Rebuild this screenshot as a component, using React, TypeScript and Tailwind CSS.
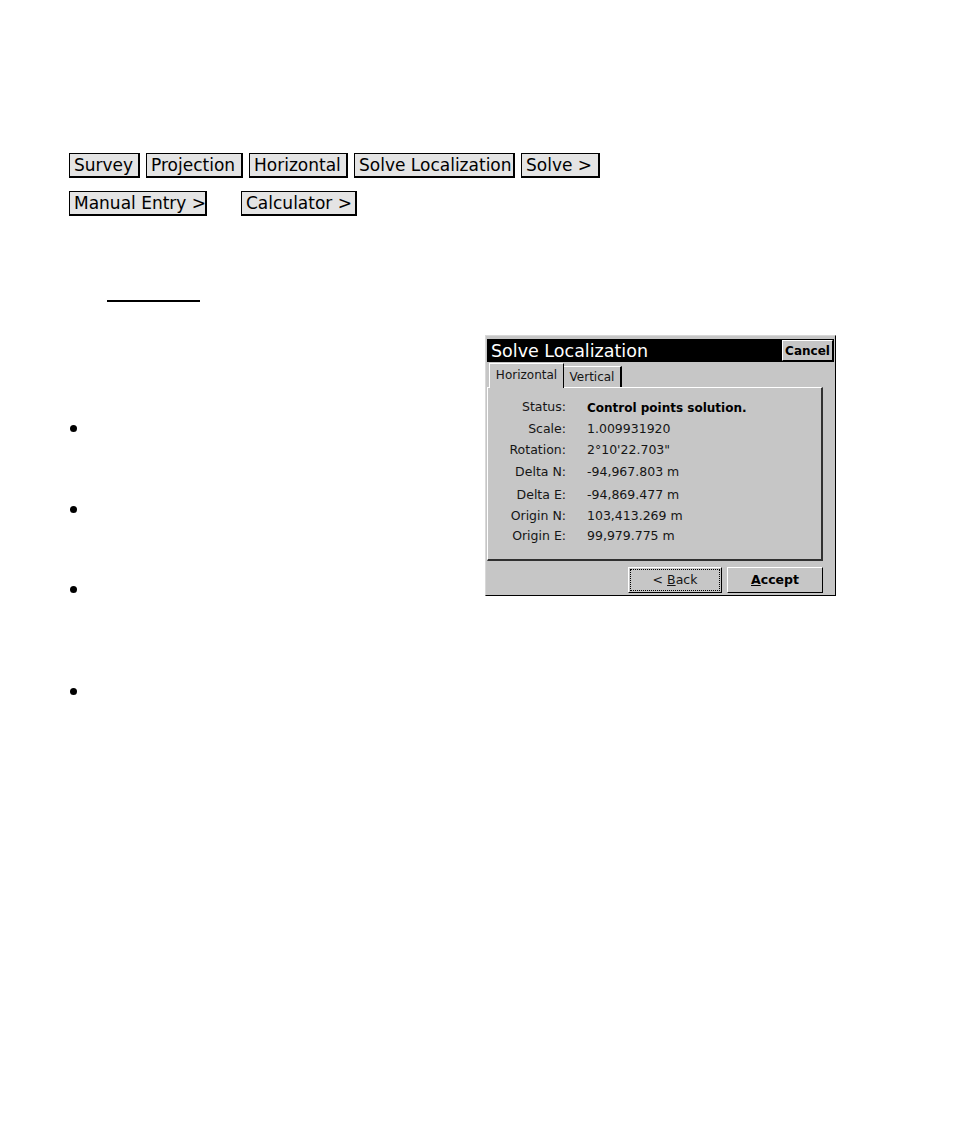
import React from "react";

const dv = { fontFamily: '"DejaVu Sans", Verdana, sans-serif' };

function NavBtn({ label, w }: { label: string; w: string }) {
  return (
    <div
      className={`${w} h-[25px] bg-[#e4e4e4] border border-black border-r-2 border-b-2 flex items-center pl-[4px] text-[17px] leading-none text-black whitespace-nowrap`}
    >
      {label}
    </div>
  );
}

const rows: { label: string; value: string; bold?: boolean; h: string }[] = [
  { label: "Status:", value: "Control points solution.", bold: true, h: "h-[21px]" },
  { label: "Scale:", value: "1.009931920", h: "h-[22px]" },
  { label: "Rotation:", value: "2°10'22.703\"", h: "h-[21px]" },
  { label: "Delta N:", value: "-94,967.803 m", h: "h-[23px]" },
  { label: "Delta E:", value: "-94,869.477 m", h: "h-[22px]" },
  { label: "Origin N:", value: "103,413.269 m", h: "h-[20px]" },
  { label: "Origin E:", value: "99,979.775 m", h: "h-[20px]" },
];

function Dialog() {
  return (
    <div
      className="w-[351px] h-[261px] bg-[#c6c6c6] border border-t-[#d8d8d8] border-l-[#d8d8d8] border-r-black border-b-black flex flex-col text-[12.5px] text-[#151515]"
      style={dv}
    >
      {/* title bar */}
      <div className="mt-[3px] mx-[1px] h-[23px] bg-black flex items-center justify-between pl-[4px] pr-[1px]">
        <span className="text-white text-[17.5px] leading-none pt-[2px]">Solve Localization</span>
        <div className="w-[51px] h-[21px] bg-[#c6c6c6] border border-t-white border-l-white border-r-black border-b-black flex items-center justify-center font-bold text-[12px] text-black">
          Cancel
        </div>
      </div>
      {/* tabs */}
      <div className="flex items-end h-[25px] pl-[3px] relative z-10">
        <div className="w-[75px] h-[25px] bg-[#c6c6c6] border-t border-l border-white border-r border-r-black flex items-start pt-[2px] justify-center -mb-[1px] text-[12px]">
          Horizontal
        </div>
        <div className="w-[58px] h-[21px] border-t border-white border-r-2 border-r-black flex items-center justify-center text-[12px]">
          Vertical
        </div>
      </div>
      {/* panel */}
      <div className="ml-[1px] w-[336px] h-[174px] border-t border-l border-white border-r-2 border-b-2 border-r-[#303030] border-b-[#303030] pt-[9px]">
        {rows.map((r) => (
          <div key={r.label} className={`flex items-center ${r.h}`}>
            <div className="w-[78px] text-right">{r.label}</div>
            <div className={`ml-[21px] whitespace-nowrap ${r.bold ? "font-bold text-black text-[12px]" : ""}`}>{r.value}</div>
          </div>
        ))}
      </div>
      {/* buttons */}
      <div className="flex justify-end gap-[5px] pr-[12px] mt-[6px]">
        <div className="w-[94px] h-[26px] border border-t-white border-l-white border-r-black border-b-black p-[1px]">
          <div className="w-full h-full border border-dotted border-black flex items-center justify-center">
            &lt; <span className="underline ml-[4px]">B</span>ack
          </div>
        </div>
        <div className="w-[96px] h-[26px] border border-t-white border-l-white border-r-black border-b-black flex items-center justify-center font-bold text-black">
          <span className="underline">A</span>ccept
        </div>
      </div>
    </div>
  );
}

function Bullet({ mt }: { mt: string }) {
  return <div className={`w-[7px] h-[7px] rounded-full bg-black ${mt}`} />;
}

export default function App() {
  return (
    <div className="w-[954px] h-[1146px] bg-white relative" style={dv}>
      <div className="pt-[153px] pl-[69px]">
        <div className="flex gap-[6px]">
          <NavBtn label="Survey" w="w-[71px]" />
          <NavBtn label="Projection" w="w-[97px]" />
          <NavBtn label="Horizontal" w="w-[99px]" />
          <NavBtn label="Solve Localization" w="w-[161px]" />
          <NavBtn label="Solve >" w="w-[79px]" />
        </div>
        <div className="flex gap-[34px] mt-[13px]">
          <NavBtn label="Manual Entry >" w="w-[138px]" />
          <NavBtn label="Calculator >" w="w-[116px]" />
        </div>
        <div className="ml-[38px] mt-[84px] w-[93px] h-[2px] bg-black" />
        <div className="flex mt-[33px]">
          <div className="w-[416px] flex flex-col pl-[1px]">
            <Bullet mt="mt-[90px]" />
            <Bullet mt="mt-[74px]" />
            <Bullet mt="mt-[73px]" />
            <Bullet mt="mt-[95px]" />
          </div>
          <Dialog />
        </div>
      </div>
    </div>
  );
}
